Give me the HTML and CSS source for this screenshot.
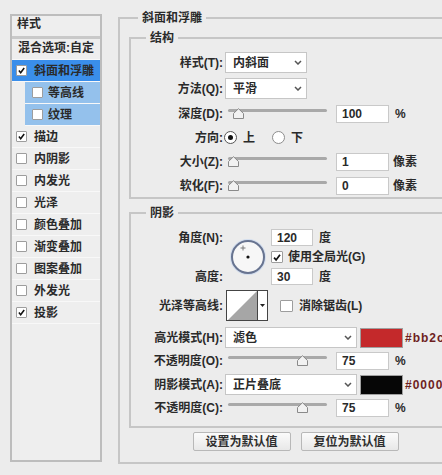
FILE: index.html
```html
<!DOCTYPE html>
<html lang="zh-CN">
<head>
<meta charset="utf-8">
<title>图层样式</title>
<link rel="stylesheet" href="styles.css">
</head>
<body>
<div class="dialog">
  <aside class="styles-list">
    <div class="list-head">样式</div>
    <div class="list-item blend">混合选项:自定</div>
    <div class="list-item selected"><span class="cb"><svg viewBox="0 0 11 11"><path d="M2.3 5.6 L4.5 8.2 L8.8 2.4" /></svg></span>斜面和浮雕</div>
    <div class="list-item sub"><span class="cb"></span>等高线</div>
    <div class="list-item sub"><span class="cb"></span>纹理</div>
    <div class="list-item"><span class="cb"><svg viewBox="0 0 11 11"><path d="M2.3 5.6 L4.5 8.2 L8.8 2.4" /></svg></span>描边</div>
    <div class="list-item"><span class="cb"></span>内阴影</div>
    <div class="list-item"><span class="cb"></span>内发光</div>
    <div class="list-item"><span class="cb"></span>光泽</div>
    <div class="list-item"><span class="cb"></span>颜色叠加</div>
    <div class="list-item"><span class="cb"></span>渐变叠加</div>
    <div class="list-item"><span class="cb"></span>图案叠加</div>
    <div class="list-item"><span class="cb"></span>外发光</div>
    <div class="list-item"><span class="cb"><svg viewBox="0 0 11 11"><path d="M2.3 5.6 L4.5 8.2 L8.8 2.4" /></svg></span>投影</div>
  </aside>

  <main class="settings">
    <fieldset class="group outer">
      <legend>斜面和浮雕</legend>

      <fieldset class="group inner structure">
        <legend>结构</legend>
        <div class="rows">
          <div class="row tall">
            <span class="label">样式(T):</span>
            <div class="select narrow"><span>内斜面</span><svg class="chev" viewBox="0 0 8 5"><path d="M1 1 L4 4 L7 1"/></svg></div>
          </div>
          <div class="row tall">
            <span class="label">方法(Q):</span>
            <div class="select narrow"><span>平滑</span><svg class="chev" viewBox="0 0 8 5"><path d="M1 1 L4 4 L7 1"/></svg></div>
          </div>
          <div class="row">
            <span class="label">深度(D):</span>
            <div class="slider"><div class="track"></div><svg class="thumb" style="left:5px" viewBox="0 0 11 11"><path d="M0.5 10.5 V5.5 L5.5 0.7 L10.5 5.5 V10.5 Z"/></svg></div>
            <input class="num" value="100">
            <span class="unit">%</span>
          </div>
          <div class="row">
            <span class="label">方向:</span>
            <span class="radio on"></span><span class="radio-text">上</span>
            <span class="radio second"></span><span class="radio-text">下</span>
          </div>
          <div class="row">
            <span class="label">大小(Z):</span>
            <div class="slider"><div class="track"></div><svg class="thumb" style="left:0px" viewBox="0 0 11 11"><path d="M0.5 10.5 V5.5 L5.5 0.7 L10.5 5.5 V10.5 Z"/></svg></div>
            <input class="num" value="1">
            <span class="unit px">像素</span>
          </div>
          <div class="row">
            <span class="label">软化(F):</span>
            <div class="slider"><div class="track"></div><svg class="thumb" style="left:0px" viewBox="0 0 11 11"><path d="M0.5 10.5 V5.5 L5.5 0.7 L10.5 5.5 V10.5 Z"/></svg></div>
            <input class="num" value="0">
            <span class="unit px">像素</span>
          </div>
        </div>
      </fieldset>

      <fieldset class="group inner shadow">
        <legend>阴影</legend>
        <div class="angle-grid">
          <span class="label a-top">角度(N):</span>
          <div class="dial">
            <svg viewBox="0 0 30 30"><path class="cross" d="M10 3.5 V8.5 M7.5 6 H12.5"/><circle cx="15" cy="15" r="1.6"/></svg>
          </div>
          <div class="ctrl"><input class="num small" value="120"><span class="unit">度</span></div>
          <div class="ctrl"><span class="cb global"><svg viewBox="0 0 11 11"><path d="M2.3 5.6 L4.5 8.2 L8.8 2.4" /></svg></span><span>使用全局光(G)</span></div>
          <span class="label a-bottom">高度:</span>
          <div class="ctrl"><input class="num small" value="30"><span class="unit">度</span></div>
        </div>

        <div class="row contour-row">
          <span class="label">光泽等高线:</span>
          <div class="contour">
            <svg class="curve" viewBox="0 0 30 29" preserveAspectRatio="none"><polygon points="1,29 30,0 30,29"/></svg>
            <div class="drop"><svg viewBox="0 0 5 3"><polygon points="0,0 5,0 2.5,3"/></svg></div>
          </div>
          <span class="cb antialias"></span><span>消除锯齿(L)</span>
        </div>

        <div class="rows lower">
          <div class="row mode">
            <span class="label">高光模式(H):</span>
            <div class="select wide"><span>滤色</span><svg class="chev" viewBox="0 0 8 5"><path d="M1 1 L4 4 L7 1"/></svg></div>
            <span class="swatch red"></span>
            <span class="hex">#bb2c2c</span>
          </div>
          <div class="row">
            <span class="label">不透明度(O):</span>
            <div class="slider"><div class="track"></div><svg class="thumb" style="left:69px" viewBox="0 0 11 11"><path d="M0.5 10.5 V5.5 L5.5 0.7 L10.5 5.5 V10.5 Z"/></svg></div>
            <input class="num" value="75">
            <span class="unit">%</span>
          </div>
          <div class="row mode">
            <span class="label">阴影模式(A):</span>
            <div class="select wide"><span>正片叠底</span><svg class="chev" viewBox="0 0 8 5"><path d="M1 1 L4 4 L7 1"/></svg></div>
            <span class="swatch black"></span>
            <span class="hex">#000000</span>
          </div>
          <div class="row">
            <span class="label">不透明度(C):</span>
            <div class="slider"><div class="track"></div><svg class="thumb" style="left:69px" viewBox="0 0 11 11"><path d="M0.5 10.5 V5.5 L5.5 0.7 L10.5 5.5 V10.5 Z"/></svg></div>
            <input class="num" value="75">
            <span class="unit">%</span>
          </div>
        </div>
      </fieldset>

      <div class="buttons">
        <button class="btn">设置为默认值</button>
        <button class="btn">复位为默认值</button>
      </div>
    </fieldset>
  </main>
</div>
</body>
</html>
```

FILE: styles.css
```css
* { box-sizing: border-box; }

html, body {
  margin: 0;
  height: 100%;
  overflow: hidden;
}

body {
  background: #ececec;
  color: #2a2a2a;
  font: bold 12px/16px "Liberation Sans", "Noto Sans CJK SC", sans-serif;
}

.dialog {
  display: flex;
  align-items: flex-start;
  gap: 16px;
  width: 500px;
  padding: 10px 0 0 10px;
}

/* ---------- left list ---------- */
.styles-list {
  flex: none;
  width: 92px;
  height: 448px;
  margin-top: 4px;
  border: 2px solid #bdbdbd;
  background: #eeeeee;
}

.list-head {
  height: 23px;
  padding: 1px 0 0 5px;
  line-height: 15px;
  border-bottom: 3px solid #c9c9c9;
}

.list-item {
  display: flex;
  align-items: center;
  height: 22px;
  padding-left: 4px;
  border-bottom: 1px solid #f8f8f8;
  white-space: nowrap;
}

.list-item.blend {
  height: 21px;
  align-items: flex-start;
  padding: 1px 0 0 6px;
}

.list-item.selected {
  background: #3a8eea;
}

.list-item.sub {
  margin-left: 13px;
  padding-left: 7px;
  background: #94c1ec;
}

.cb {
  flex: none;
  display: inline-flex;
  align-items: center;
  justify-content: center;
  width: 11px;
  height: 11px;
  margin-right: 7px;
  background: #fff;
  border: 1px solid #9d9d9d;
  border-radius: 1px;
}

.list-item.sub .cb { margin-right: 5px; }

.cb svg {
  width: 11px;
  height: 11px;
  fill: none;
  stroke: #111;
  stroke-width: 1.9;
}

/* ---------- group boxes ---------- */
.group {
  margin: 0;
  min-width: 0;
  border: 2px solid #c6c6c6;
}

legend {
  padding: 0 4px;
  line-height: 16px;
}

.group.outer {
  width: 357px;
  padding: 4px 11px 11px 9px;
}

.outer > legend { margin-left: 9px; }

.group.inner {
  padding: 6px 0 2px 0;
}

.inner > legend { margin-left: 15px; }

.group.shadow {
  margin-top: 6px;
  padding: 8px 0 9px 0;
}

/* ---------- rows ---------- */
.rows {
  display: flex;
  flex-direction: column;
  gap: 5px;
}

.row {
  display: flex;
  align-items: center;
  height: 19px;
  white-space: nowrap;
}

.row.tall { height: 21px; }

.label {
  flex: none;
  width: 92px;
  margin-right: 2px;
  text-align: right;
  white-space: nowrap;
}

.select {
  flex: none;
  display: flex;
  align-items: center;
  justify-content: space-between;
  height: 21px;
  padding: 0 4px 0 7px;
  background: #fff;
  border: 1px solid #c6c6c6;
}

.select.narrow { width: 82px; }
.select.wide { width: 132px; height: 21px; }

.chev {
  width: 8px;
  height: 5px;
  fill: none;
  stroke: #555;
  stroke-width: 1.5;
}

.slider {
  position: relative;
  flex: none;
  width: 99px;
  height: 18px;
  margin-left: 3px;
}

.track {
  margin-top: 4px;
  height: 3px;
  border-radius: 2px;
  background: #a9a9a9;
}

.thumb {
  position: absolute;
  top: 3px;
  width: 11px;
  height: 11px;
  fill: #f2f2f2;
  stroke: #8a8a8a;
  stroke-width: 1;
}

.num {
  flex: none;
  width: 53px;
  height: 18px;
  margin: 0 0 0 9px;
  padding: 0 5px;
  border: 1px solid #c9c9c9;
  background: #fff;
  color: #2a2a2a;
  font: inherit;
}

.num.small {
  width: 42px;
  height: 17px;
  margin-left: 0;
}

.unit { margin-left: 6px; }
.unit.px { margin-left: 4px; }

.radio {
  flex: none;
  display: inline-flex;
  align-items: center;
  justify-content: center;
  width: 13px;
  height: 13px;
  margin-left: -1px;
  border-radius: 50%;
  border: 1px solid #8d8d8d;
  background: #fff;
}

.radio.on { border-color: #555; }

.radio.on::after {
  content: "";
  width: 5px;
  height: 5px;
  border-radius: 50%;
  background: #111;
}

.radio.second { margin-left: 17px; }

.radio-text { margin-left: 6px; }

/* ---------- angle block ---------- */
.angle-grid {
  display: grid;
  grid-template-columns: 94px 36px auto;
  grid-template-rows: 17px 17px 17px;
  row-gap: 2.5px;
  column-gap: 5px;
  align-items: center;
  white-space: nowrap;
}

.a-top { grid-column: 1; grid-row: 1; }
.a-bottom { grid-column: 1; grid-row: 3; }

.dial {
  grid-column: 2;
  grid-row: 1 / 4;
  justify-self: center;
  width: 34px;
  height: 34px;
  border-radius: 50%;
  border: 2px solid #687490;
  background: #f7f7f7;
  box-shadow: 0 0 0 1px #d2ddee;
}

.dial svg {
  display: block;
  width: 30px;
  height: 30px;
}

.dial .cross {
  stroke: #7a7a7a;
  stroke-width: 1;
  fill: none;
}

.dial circle { fill: #111; }

.ctrl {
  grid-column: 3;
  display: flex;
  align-items: center;
}

.cb.global {
  width: 12px;
  height: 12px;
  margin-right: 5px;
}

/* ---------- contour ---------- */
.contour-row {
  height: 31px;
  margin-top: 5px;
}

.contour {
  flex: none;
  display: flex;
  width: 42px;
  height: 31px;
  margin-left: 1px;
  border: 1px solid #444;
  background: #fff;
}

.curve {
  width: 30px;
  height: 29px;
  fill: #a6a6a6;
}

.drop {
  flex: 1;
  display: flex;
  align-items: center;
  justify-content: center;
  border-left: 1px solid #444;
}

.drop svg {
  width: 5px;
  height: 3px;
  fill: #222;
}

.cb.antialias {
  width: 13px;
  height: 12px;
  margin: 0 6px 0 12px;
}

/* ---------- blend modes ---------- */
.lower {
  margin-top: 6px;
  gap: 4px;
}

.lower .row { height: 18px; }
.lower .row.mode { height: 21px; }

.swatch {
  flex: none;
  width: 43px;
  height: 20px;
  margin-left: 3px;
  border: 1px solid #a0a0a0;
}

.swatch.red { background: #c4292b; }
.swatch.black { background: #060606; }

.hex {
  margin-left: 2px;
  color: #6e1f1f;
  letter-spacing: 1px;
}

/* ---------- buttons ---------- */
.buttons {
  display: flex;
  justify-content: center;
  gap: 10px;
  margin-top: 4px;
}

.btn {
  width: 98px;
  height: 19px;
  padding: 0;
  border: 1px solid #b8b8b8;
  border-radius: 2px;
  background: linear-gradient(#fbfbfb, #e8e8e8);
  color: #2f2f2f;
  font: inherit;
}
```
